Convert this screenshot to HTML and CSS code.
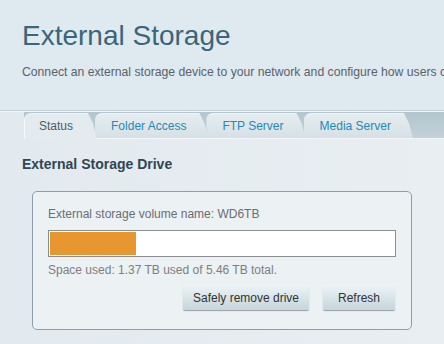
FILE: index.html
```html
<!DOCTYPE html>
<html lang="en">

<head>
    <meta charset="UTF-8">
    <meta name="viewport" content="width=device-width, initial-scale=1.0">
    <title>External Storage</title>
    <link rel="stylesheet" href="styles.css">
</head>

<body>
    <div class="header">
        <h1>External Storage</h1>
        <p>Connect an external storage device to your network and configure how users can access it.</p>
    </div>
    <div class="tabs">
        <a href="#" class="tab current">Status</a>
        <a href="#" class="tab">Folder Access</a>
        <a href="#" class="tab">FTP Server</a>
        <a href="#" class="tab">Media Server</a>
    </div>
    <div class="content">
        <h2>External Storage Drive</h2>
        <div class="panel">
            <div class="label">External storage volume name: WD6TB</div>
            <div class="bar">
                <div class="fill" style="width: 25.1%"></div>
            </div>
            <div class="used">Space used: 1.37 TB used of 5.46 TB total.</div>
            <div class="actions">
                <button class="btn">Safely remove drive</button>
                <button class="btn">Refresh</button>
            </div>
        </div>
    </div>
</body>

</html>
```

FILE: styles.css
```css
/* 初始化 */
* {
    margin: 0;
    padding: 0;
    box-sizing: border-box;
}

a {
    display: block;
    text-decoration: none;
}

body {
    width: 444px;
    height: 344px;
    overflow: hidden;
    font-family: "Liberation Sans", Arial, sans-serif;
    background: linear-gradient(to right, #e3eaef, #e8eef2);
}

.header {
    height: 111px;
    padding: 20px 0 0 22px;
    background-color: #dfe9f0;
    border-bottom: 1px solid #c4ced4;
    box-shadow: 0 1px 0 #f3f6f8;
    white-space: nowrap;
    overflow: hidden;
}

.header h1 {
    font-size: 28px;
    font-weight: normal;
    line-height: 32px;
    color: #3b6579;
}

.header p {
    margin-top: 12px;
    font-size: 12.2px;
    line-height: 16px;
    color: #5a6268;
}

.tabs {
    display: flex;
    align-items: flex-end;
    margin: 1px 0 0 24px;
    height: 27px;
    background: linear-gradient(#b3c5ce, #c2d1d8);
    border-bottom: 1px solid #f4f7f9;
}

.tab {
    position: relative;
    height: 25px;
    margin-right: -2px;
    padding: 0 22px 0 16px;
    font-size: 12px;
    line-height: 25px;
    color: #1a8ac0;
    background: linear-gradient(#e6edf1, #d6e0e5);
    border-top: 1px solid #f0f4f6;
    border-top-left-radius: 7px;
    clip-path: polygon(0 0, calc(100% - 9px) 0, calc(100% - 4px) 40%, 100% 100%, 0 100%);
}

.tab:nth-child(1) {
    z-index: 4;
}

.tab:nth-child(2) {
    z-index: 3;
}

.tab:nth-child(3) {
    z-index: 2;
}

.tab:nth-child(4) {
    z-index: 1;
}

.tab.current {
    height: 26px;
    margin-bottom: -1px;
    padding: 0 24px 0 14px;
    color: #4a5c66;
    background: #e4ebef;
    border-left: 1px solid #f6f9fa;
}

.content {
    padding: 16px 0 0 22px;
}

.content h2 {
    font-size: 14px;
    line-height: 18px;
    color: #2f4654;
}

.panel {
    width: 380px;
    margin: 18px 0 0 10px;
    padding: 15px 15px 19px;
    background-color: #ecf1f4;
    border: 1px solid #8e9ea8;
    border-radius: 5px;
}

.label,
.used {
    font-size: 12px;
    line-height: 14px;
    color: #6a6e71;
}

.bar {
    margin-top: 9px;
    height: 27px;
    padding: 1px;
    background-color: #fff;
    border: 1px solid #8a8e91;
}

.fill {
    height: 100%;
    background-color: #e8962f;
}

.used {
    margin-top: 6px;
    color: #7b7f82;
}

.actions {
    display: flex;
    justify-content: flex-end;
    gap: 14px;
    margin-top: 8px;
    padding-right: 1px;
}

.btn {
    height: 25px;
    padding: 0 10px;
    font-family: "Liberation Sans", Arial, sans-serif;
    font-size: 12px;
    color: #333;
    background: linear-gradient(#eef4f6, #c4d5dc);
    border: none;
    border-radius: 2px;
    box-shadow: 0 1px 1px rgba(0, 0, 0, .35);
    cursor: pointer;
}

.btn:last-child {
    width: 72px;
}
```
